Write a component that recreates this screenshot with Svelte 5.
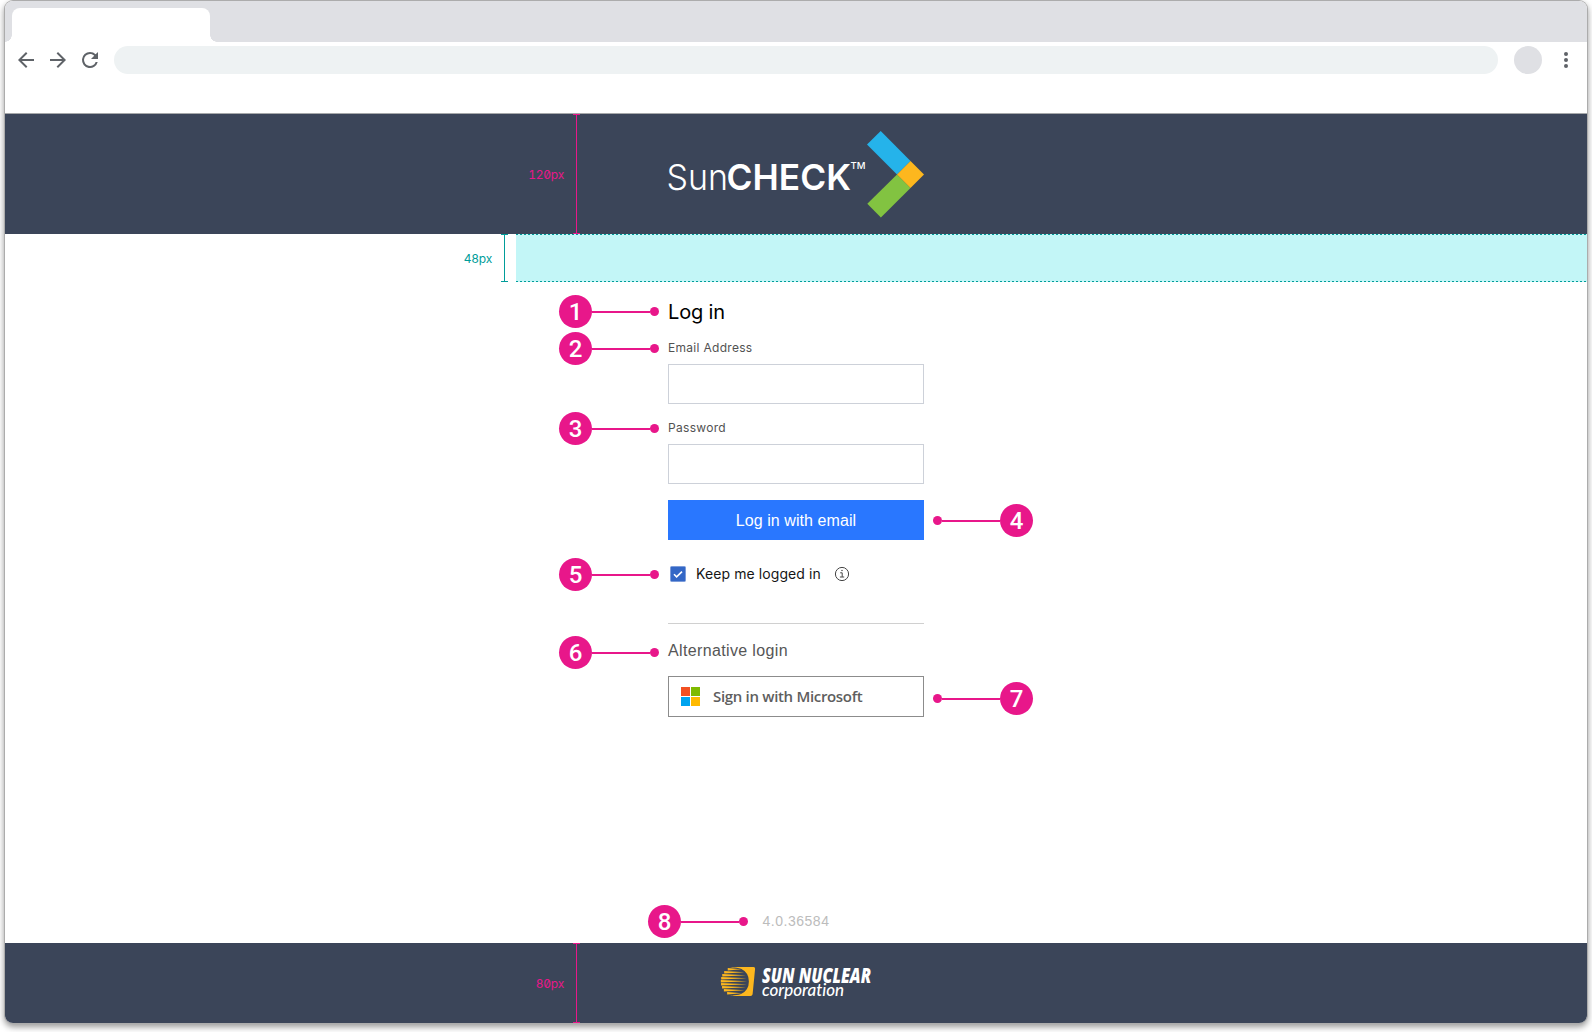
<script>
  const callouts = [
    { n: 1, x: 559, y: 295, side: 'right' },
    { n: 2, x: 559, y: 332, side: 'right' },
    { n: 3, x: 559, y: 412, side: 'right' },
    { n: 4, x: 933, y: 504, side: 'left' },
    { n: 5, x: 559, y: 558, side: 'right' },
    { n: 6, x: 559, y: 636, side: 'right' },
    { n: 7, x: 933, y: 682, side: 'left' },
    { n: 8, x: 648, y: 905, side: 'right' }
  ];
  // Tapering stripes of the globe, top to bottom
  const stripes = [0, 1, 2, 3, 4, 5, 6, 7, 8].map((i) => {
    const y = 2.2 + i * 3;
    const d = y - 14.4;
    const half = Math.sqrt(Math.max(0, 14.2 * 14.2 - d * d));
    return `M${14 - half} ${y - 1.25}L${14 + half * 0.85} ${y}L${14 - half} ${y + 1.25}Z`;
  });
</script>

<div class="window">
  <div class="tabs"><div class="tab"></div></div>
  <div class="toolbar">
    <svg class="nav" viewBox="0 0 24 24"><path d="M20 11H7.83l5.59-5.59L12 4l-8 8 8 8 1.41-1.41L7.83 13H20v-2z" /></svg>
    <svg class="nav" viewBox="0 0 24 24"><path d="M12 4l-1.41 1.41L16.17 11H4v2h12.17l-5.58 5.59L12 20l8-8z" /></svg>
    <svg class="nav" viewBox="0 0 24 24"><path d="M17.65 6.35A7.96 7.96 0 0 0 12 4a8 8 0 1 0 7.73 10h-2.08A6 6 0 1 1 12 6c1.66 0 3.14.69 4.22 1.78L13 11h7V4l-2.35 2.35z" /></svg>
    <div class="address"></div>
    <div class="avatar"></div>
    <svg class="nav" viewBox="0 0 24 24"><circle cx="12" cy="6" r="2" /><circle cx="12" cy="12" r="2" /><circle cx="12" cy="18" r="2" /></svg>
  </div>

  <header>
    <svg class="logo" viewBox="0 0 258 88">
      <text class="sun" x="-1.6" y="59.5" textLength="61.5" lengthAdjust="spacingAndGlyphs">Sun</text>
      <text class="check" x="58.6" y="59.5" textLength="124.4" lengthAdjust="spacingAndGlyphs">CHECK</text>
      <text class="tm" x="182.4" y="39.3" textLength="15" lengthAdjust="spacingAndGlyphs">TM</text>
      <path fill="#25b3ea" d="M212.7 1L199 14.6 229 44.5 242.5 31z" />
      <path fill="#82c341" d="M229 44.5L242.5 58 212.9 87.4 199.3 73.8z" />
      <path fill="#fdb71e" d="M242.5 31L256 44.5 242.5 58 229 44.5z" />
    </svg>
  </header>

  <main>
    <form onsubmit={(e) => e.preventDefault()}>
      <h1>Log in</h1>
      <label for="email">Email Address</label>
      <input id="email" type="text" />
      <label for="password">Password</label>
      <input id="password" type="password" />
      <button class="primary" type="button">Log in with email</button>
      <div class="keep">
        <svg class="box" viewBox="0 0 16 16"><rect x=".5" y=".5" width="15" height="15" rx="1" fill="#3367c6" stroke="#7c9cda" /><path d="M4 8.3l2.6 2.6L12 5.6" fill="none" stroke="#fff" stroke-width="1.6" /></svg>
        <span>Keep me logged in</span>
        <svg class="info" viewBox="0 0 16 16" fill="none" stroke="#444"><circle cx="8" cy="8" r="6.6" /><path d="M6.2 6.8h2v4.1M5.9 11h4.3" /><circle cx="8" cy="4.5" r=".4" fill="#444" stroke-width=".7" /></svg>
      </div>
      <hr />
      <h2>Alternative login</h2>
      <button class="microsoft" type="button">
        <svg viewBox="0 0 19 19"><path fill="#f25022" d="M0 0h9v9H0z" /><path fill="#7fba00" d="M10 0h9v9h-9z" /><path fill="#00a4ef" d="M0 10h9v9H0z" /><path fill="#ffb900" d="M10 10h9v9h-9z" /></svg>
        <span>Sign in with Microsoft</span>
      </button>
    </form>
    <div class="version">4.0.36584</div>
  </main>

  <footer>
    <svg class="corp" viewBox="0 0 152 38">
      <path fill="#fdb71e" d="M9 .5C11 .1 12 0 14 0H32.5Q34.3 0 34.1 1.8L31.6 27.2Q31.3 29 29.5 29H14C12 29 11 28.8 9 28.3C12 28.5 16 28.5 20 27A14 14 0 0 0 20 1.8C16 .3 12 .3 9 .5Z" />
      {#each stripes as d}<path fill="#fdb71e" {d} />{/each}
      <text class="name" x="41" y="15.7" textLength="109" lengthAdjust="spacingAndGlyphs">SUN NUCLEAR</text>
      <text class="sub" x="41" y="29" textLength="82" lengthAdjust="spacingAndGlyphs">corporation</text>
    </svg>
  </footer>
</div>

<div class="band"></div>
<div class="measure header-size"><span>120px</span><i></i></div>
<div class="measure gap-size"><span>48px</span><i></i></div>
<div class="measure footer-size"><span>80px</span><i></i></div>

{#each callouts as c}
  <div class="callout {c.side}" style="left:{c.x}px;top:{c.y}px">
    <b>{c.n}</b><span class="line"></span><span class="dot"></span>
  </div>
{/each}

<style>
  :global(body) { box-sizing: border-box; min-height: 1032px; padding: 1px 0 0 5px; background: #fff; overflow: hidden; }
  .window {
    display: flex; flex-direction: column; box-sizing: border-box;
    width: 1582px; height: 1022px;
    border-radius: 8px; overflow: hidden; background: #fff;
    box-shadow: 0 0 0 1px #acacac, 0 3px 6px 1px rgba(0, 0, 0, 0.4);
    font-family: Inter, sans-serif;
  }
  .tabs { display: flex; flex: none; height: 41px; padding: 7px 0 0 7px; box-sizing: border-box; background: #dfe0e4; }
  .tab { position: relative; width: 198px; background: #fff; border-radius: 8px 8px 0 0; }
  .tab::before, .tab::after { content: ''; position: absolute; bottom: 0; width: 7px; height: 7px; }
  .tab::before { right: 100%; background: radial-gradient(circle at 0 0, transparent 6.5px, #fff 7px); }
  .tab::after { left: 100%; background: radial-gradient(circle at 100% 0, transparent 6.5px, #fff 7px); }
  .toolbar { display: flex; flex: none; align-items: center; height: 36px; padding: 0 9px 35px; border-bottom: 1px solid #a6a8aa; }
  .nav { width: 24px; height: 24px; margin-right: 8px; fill: #5f6368; flex: none; }
  .nav:last-child { margin: 0 0 0 12px; }
  .address { flex: 1; height: 28px; margin: 0 16px 0 4px; border-radius: 14px; background: #eef2f3; }
  .avatar { width: 28px; height: 28px; border-radius: 50%; background: #dfe0e4; }
  header { flex: none; display: flex; justify-content: center; align-items: center; height: 120px; background: #3b4559; }
  .logo { width: 258px; height: 88px; margin-left: 2px; overflow: visible; }
  .logo text { fill: #fff; font-family: Inter, sans-serif; }
  .sun { font-size: 36px; font-weight: 300; }
  .check { font-size: 36px; font-weight: 600; }
  .logo .tm { font-size: 9.5px; font-weight: 500; }
  main { flex: 1; display: flex; flex-direction: column; align-items: center; justify-content: space-between; padding: 64px 0 12px; }
  form { display: flex; flex-direction: column; width: 256px; }
  h1 { margin: 0 0 14px; font-size: 20px; line-height: 28px; letter-spacing: -0.15px; font-weight: 400; color: #000; }
  label { font-size: 12px; line-height: 16px; letter-spacing: 0.3px; color: #525252; margin-bottom: 8px; }
  input { box-sizing: border-box; width: 256px; height: 40px; margin: 0 0 16px; padding: 0 12px; border: 1px solid #cdd1d9; background: #fff; outline: 0; }
  button { box-sizing: border-box; padding: 0; margin: 0; }
  .primary { height: 40px; padding-top: 2px; border: 0; background: #2977ff; color: #fff; font: 16px/38px "Liberation Sans", sans-serif; letter-spacing: 0.08px; }
  .keep { display: flex; align-items: center; height: 20px; margin-top: 24px; padding-left: 2px; font-size: 14px; line-height: 20px; letter-spacing: 0.09px; color: #161616; }
  .box { width: 16px; height: 16px; margin-right: 10px; }
  .info { width: 16px; height: 16px; margin-left: 13px; }
  hr { width: 100%; height: 1px; margin: 39px 0 17px; border: 0; background: #d0d0d0; }
  h2 { margin: 0 0 15px; font: 16px/20px "Liberation Sans", sans-serif; letter-spacing: 0.36px; color: #565656; }
  .microsoft { display: flex; align-items: center; height: 41px; padding-left: 12px; border: 1px solid #8c8c8c; background: #fff; color: #5e5e5e; font: 600 15px/20px "Open Sans", sans-serif; letter-spacing: -0.32px; }
  .microsoft svg { width: 19px; height: 19px; margin-right: 13px; }
  .microsoft span { padding-bottom: 2px; }
  .version { font: 14px/20px "Liberation Sans", sans-serif; letter-spacing: 0.52px; color: #bcbcbc; }
  footer { flex: none; display: flex; justify-content: center; height: 80px; padding-top: 24px; box-sizing: border-box; background: #3b4559; }
  .corp { width: 152px; height: 38px; margin-left: 2px; overflow: visible; }
  .corp text { fill: #fff; font-style: italic; font-variant-ligatures: none; }
  .name { font: 800 21.8px "Open Sans", sans-serif; }
  .sub { font: 500 16.5px Lato, sans-serif; }

  .band { position: absolute; left: 516px; top: 234px; width: 1071px; height: 48px; background: #c3f6f7; }
  .band::before, .band::after { content: ''; position: absolute; left: 0; right: 0; height: 1px; background: repeating-linear-gradient(90deg, #009d9a 0 2px, #c3f6f7 2px 4px); }
  .band::before { top: 0; }
  .band::after { bottom: 0; }

  .measure { position: absolute; display: flex; align-items: center; justify-content: flex-end; width: 80px; color: #e8178a; font: 12px/16px Inter, sans-serif; letter-spacing: -0.25px; font-feature-settings: 'zero', 'tnum'; }
  .measure i { position: relative; width: 7px; height: 100%; box-sizing: border-box; border: solid currentColor; border-width: 1px 0; background: linear-gradient(currentColor, currentColor) 3px 0 / 1px 100% no-repeat; }
  .measure span { margin-right: 9px; padding-top: 2px; }
  .header-size { left: 500px; top: 114px; height: 120px; }
  .gap-size { left: 428px; top: 234px; height: 48px; color: #009d9a; }
  .footer-size { left: 500px; top: 943px; height: 80px; }

  .callout { position: absolute; display: flex; align-items: center; width: 100px; height: 33px; }
  .callout.left { flex-direction: row-reverse; }
  .callout b { flex: none; box-sizing: border-box; width: 33px; height: 33px; padding-top: 1px; border-radius: 50%; background: #e8178a; color: #fff; font: 500 24px/32px Roboto, sans-serif; text-align: center; }
  .line { flex: 1; height: 2px; margin-top: 1px; background: #e8178a; }
  .dot { flex: none; width: 9px; height: 9px; border-radius: 50%; background: #e8178a; }
</style>
